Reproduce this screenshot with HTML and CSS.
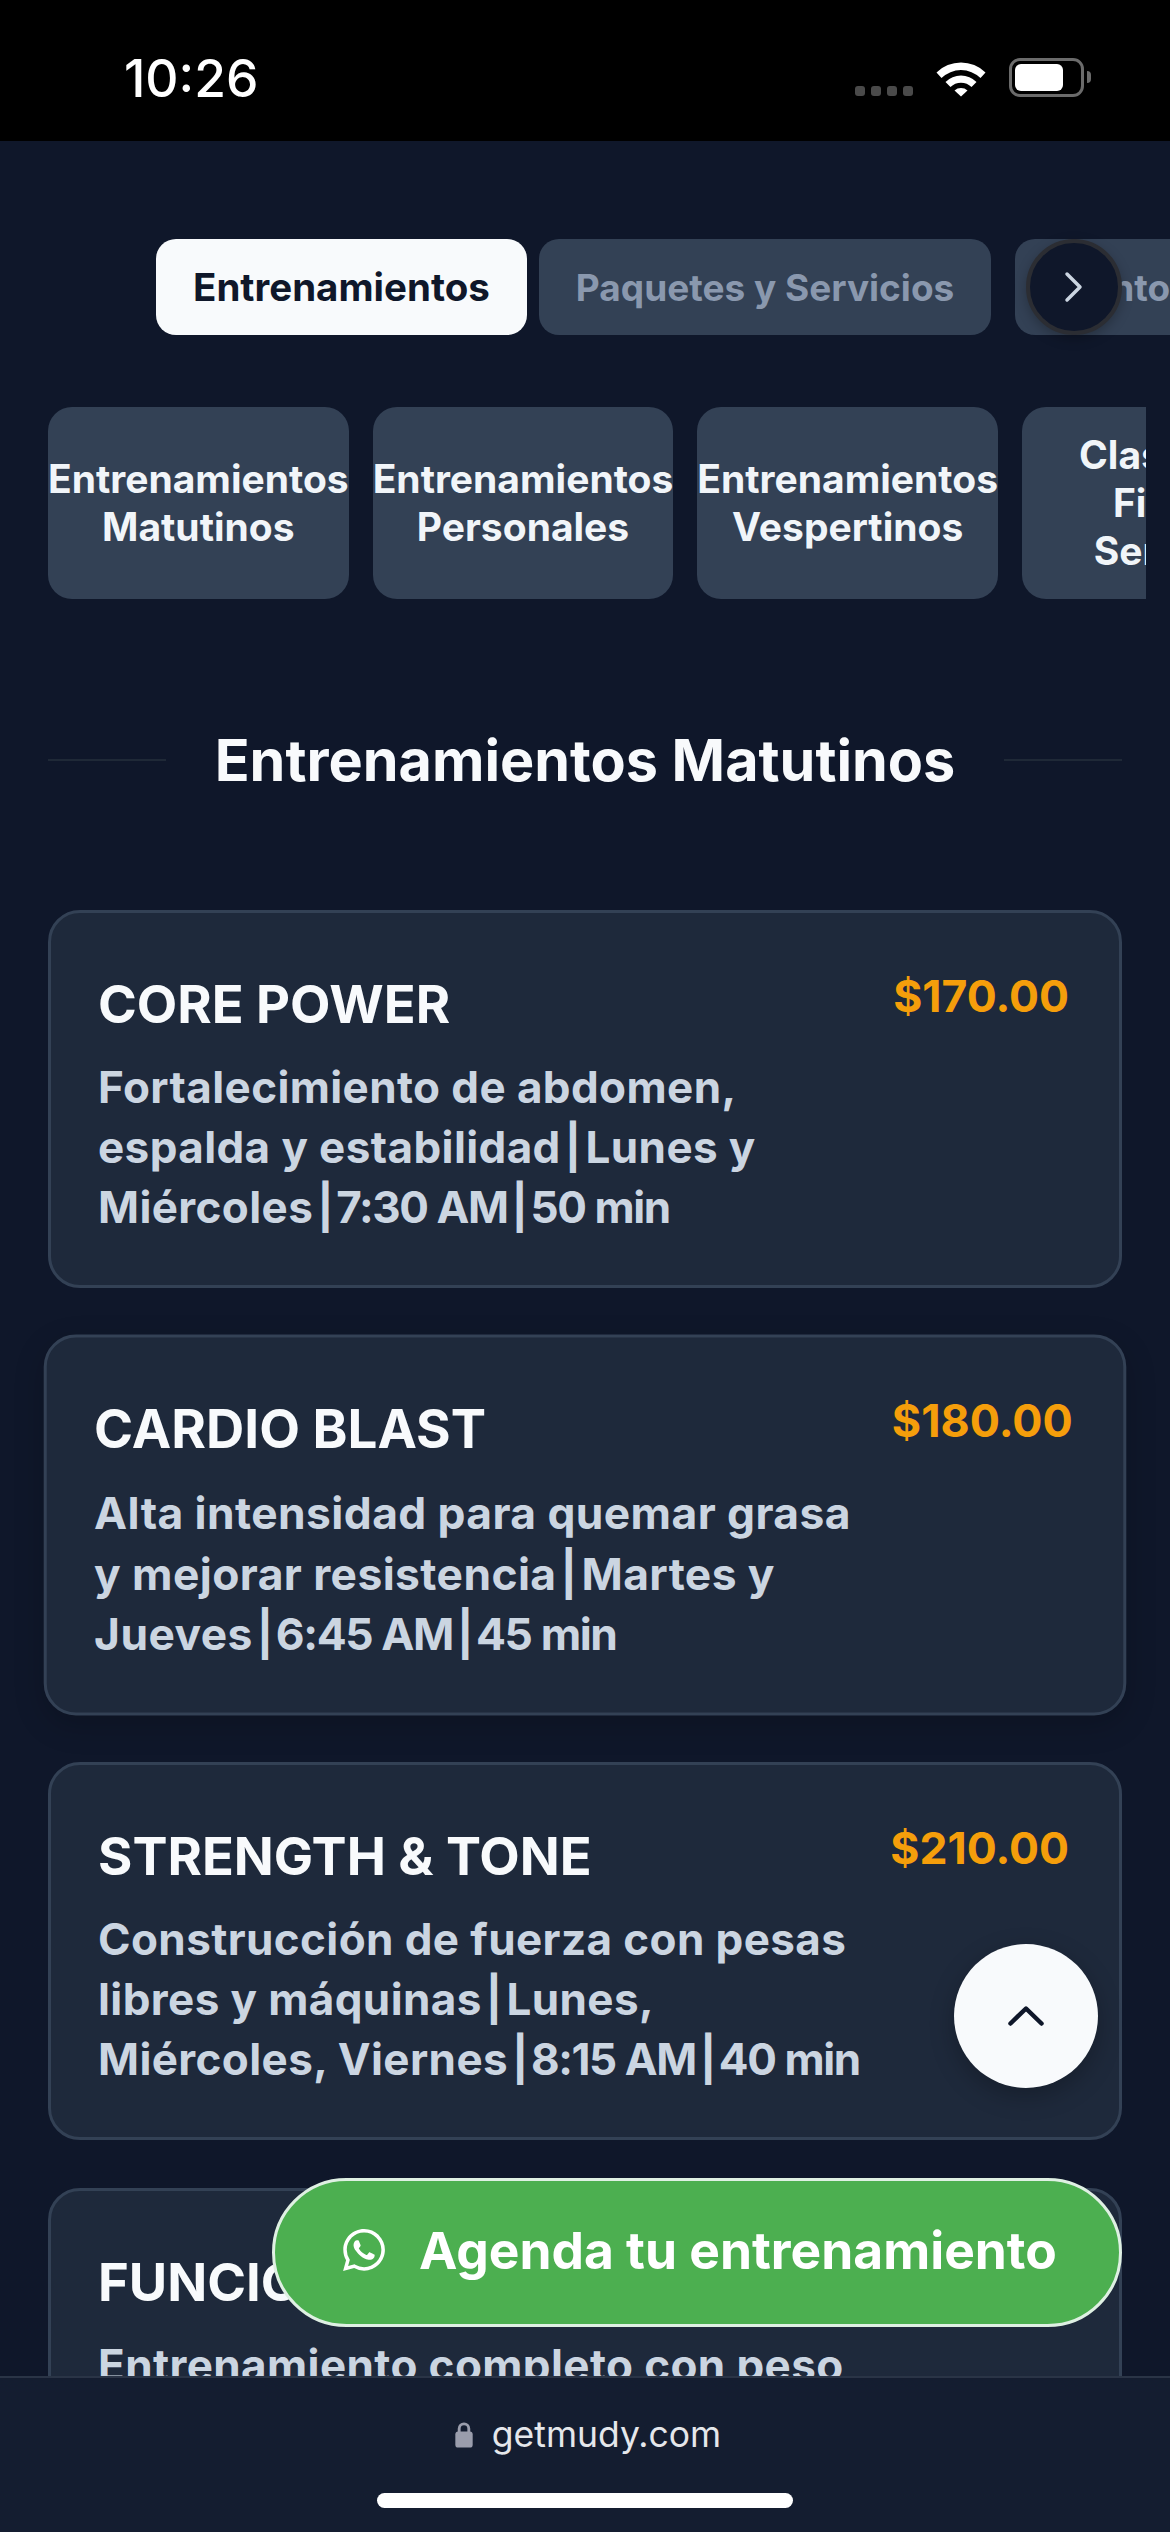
FILE: index.html
```html
<!DOCTYPE html>
<html lang="es">
<head>
    <meta charset="UTF-8">
    <meta name="viewport" content="width=device-width, initial-scale=1.0">
    <title>Entrenamientos</title>
    <link rel="stylesheet" href="styles.css">
</head>
<body>
    <div class="phone">
        <!-- iOS status bar -->
        <header class="status-bar">
            <span class="clock">10:26</span>
            <div class="status-icons">
                <div class="signal"><i></i><i></i><i></i><i></i></div>
                <svg class="wifi" viewBox="0 0 50 38" width="50" height="38">
                    <path d="M0.5 13.5 A35 35 0 0 1 49.5 13.5 L44.5 19 A28 28 0 0 0 5.5 19 Z" fill="#fff"/>
                    <path d="M9.5 23 A22 22 0 0 1 40.5 23 L35.5 28 A15 15 0 0 0 14.5 28 Z" fill="#fff"/>
                    <path d="M18.5 31.5 A10 10 0 0 1 31.5 31.5 L25 37.5 Z" fill="#fff"/>
                </svg>
                <div class="battery"><div class="battery-level"></div></div>
            </div>
        </header>

        <main class="content">
            <nav class="tabs">
                <button class="tab active">Entrenamientos</button>
                <button class="tab">Paquetes y Servicios</button>
                <button class="tab tab-last">Puntos</button>
            </nav>
            <button class="tabs-next" aria-label="Siguiente">
                <svg viewBox="0 0 20 32" width="20" height="32"><path d="M3 3 L16 16 L3 29" fill="none" stroke="#cbd5e1" stroke-width="3.5" stroke-linecap="round" stroke-linejoin="round"/></svg>
            </button>

            <div class="subtabs">
                <button class="subtab">Entrenamientos<br>Matutinos</button>
                <button class="subtab">Entrenamientos<br>Personales</button>
                <button class="subtab">Entrenamientos<br>Vespertinos</button>
                <button class="subtab">Clases de<br>Fitbox<br>Servicio</button>
            </div>

            <div class="section-title">
                <span class="rule"></span>
                <h2>Entrenamientos Matutinos</h2>
                <span class="rule"></span>
            </div>

            <section class="cards">
                <article class="card">
                    <div class="card-info">
                        <h3>CORE POWER</h3>
                        <p>Fortalecimiento de abdomen,<br>espalda y estabilidad<span class="sep">|</span>Lunes y<br>Miércoles<span class="sched"><span class="sep">|</span>7:30 AM<span class="sep">|</span>50 min</span></p>
                    </div>
                    <span class="price">$170.00</span>
                </article>
                <article class="card featured">
                    <div class="card-info">
                        <h3>CARDIO BLAST</h3>
                        <p>Alta intensidad para quemar grasa<br>y mejorar resistencia<span class="sep">|</span>Martes y<br>Jueves<span class="sched"><span class="sep">|</span>6:45 AM<span class="sep">|</span>45 min</span></p>
                    </div>
                    <span class="price">$180.00</span>
                </article>
                <article class="card">
                    <div class="card-info">
                        <h3>STRENGTH &amp; TONE</h3>
                        <p>Construcción de fuerza con pesas<br>libres y máquinas<span class="sep">|</span>Lunes,<br>Miércoles, Viernes<span class="sched"><span class="sep">|</span>8:15 AM<span class="sep">|</span>40 min</span></p>
                    </div>
                    <span class="price">$210.00</span>
                </article>
                <article class="card">
                    <div class="card-info">
                        <h3>FUNCIONAL</h3>
                        <p>Entrenamiento completo con peso<br>corporal<span class="sep">|</span>Martes y Jueves<br>7:00 AM<span class="sep">|</span>45 min</p>
                    </div>
                    <span class="price">$190.00</span>
                </article>
            </section>

            <button class="scroll-top" aria-label="Subir">
                <svg viewBox="0 0 36 20" width="36" height="20"><path d="M2.5 17.5 L18 2.5 L33.5 17.5" fill="none" stroke="#0f172a" stroke-width="4.5" stroke-linecap="round" stroke-linejoin="round"/></svg>
            </button>

            <button class="whatsapp-cta">
                <svg class="wa-icon" viewBox="0 0 24 24" width="42" height="42">
                    <path fill="#fff" d="M17.47 14.38c-.3-.15-1.76-.87-2.03-.97-.27-.1-.47-.15-.67.15-.2.3-.77.97-.94 1.16-.17.2-.35.22-.64.07-.3-.15-1.26-.46-2.39-1.47-.88-.79-1.48-1.76-1.65-2.06-.17-.3-.02-.46.13-.6.13-.14.3-.35.45-.52.15-.17.2-.3.3-.5.1-.2.05-.37-.02-.52-.07-.15-.67-1.61-.92-2.21-.24-.58-.49-.5-.67-.51h-.57c-.2 0-.52.07-.79.37-.27.3-1.04 1.02-1.04 2.48 0 1.46 1.07 2.88 1.21 3.07.15.2 2.1 3.2 5.08 4.49.71.3 1.26.49 1.69.63.71.22 1.36.19 1.87.12.57-.09 1.76-.72 2.01-1.41.25-.7.25-1.29.17-1.41-.07-.13-.27-.2-.57-.35zM12.05 21.8h-.01a9.87 9.87 0 0 1-5.03-1.38l-.36-.21-3.74.98 1-3.65-.24-.37a9.86 9.86 0 0 1-1.51-5.26c0-5.45 4.44-9.88 9.89-9.88 2.64 0 5.12 1.03 6.99 2.9a9.83 9.83 0 0 1 2.89 6.99c0 5.45-4.44 9.88-9.88 9.88zM20.46 3.49A11.82 11.82 0 0 0 12.05 0C5.5 0 .16 5.34.16 11.89c0 2.1.55 4.14 1.59 5.94L.06 24l6.31-1.65a11.88 11.88 0 0 0 5.68 1.45h.01c6.55 0 11.89-5.34 11.89-11.89 0-3.18-1.24-6.16-3.49-8.41z"/>
                </svg>
                <span>Agenda tu entrenamiento</span>
            </button>
        </main>

        <!-- Safari address bar -->
        <footer class="address-bar">
            <div class="url">
                <svg viewBox="0 0 20 28" width="20" height="27"><path d="M5 13 V8 A5 5 0 0 1 15 8 V13" fill="none" stroke="#9a9dac" stroke-width="3"/><rect x="1" y="11" width="18" height="16.5" rx="3" fill="#9a9dac"/></svg>
                <span>getmudy.com</span>
            </div>
            <div class="home-indicator"></div>
        </footer>
    </div>
</body>
</html>
```

FILE: styles.css
```css
/* Reset and page base */
* {
    margin: 0;
    padding: 0;
    box-sizing: border-box;
}

body {
    background: #0f172a;
    font-family: "Inter", "Liberation Sans", sans-serif;
    color: #f8fafc;
}

button {
    font-family: inherit;
    border: none;
}

.phone {
    width: 1170px;
    height: 2532px;
    display: flex;
    flex-direction: column;
    overflow: hidden;
}

/* Status bar */
.status-bar {
    height: 141px;
    flex-shrink: 0;
    background: #000;
    display: flex;
    align-items: center;
    justify-content: space-between;
    padding: 14px 86px 0 124px;
}

.clock {
    font-family: "Inter", sans-serif;
    font-size: 51.5px;
    font-weight: 500;
    color: #fff;
}

.status-icons {
    display: flex;
    align-items: center;
}

.signal {
    display: flex;
    gap: 6px;
    margin-top: 27px;
    margin-right: 23px;
}

.signal i {
    width: 10px;
    height: 10px;
    border-radius: 3px;
    background: #4a4a4a;
}

.wifi {
    margin-right: 23px;
}

.battery {
    position: relative;
    width: 75px;
    height: 39px;
    border: 3px solid #6b6b6b;
    border-radius: 11px;
    padding: 3px;
}

.battery::after {
    content: "";
    position: absolute;
    right: -10px;
    top: 10px;
    width: 4px;
    height: 12px;
    background: #6b6b6b;
    border-radius: 0 5px 5px 0;
}

.battery-level {
    width: 48px;
    height: 100%;
    background: #fff;
    border-radius: 6px;
}

/* Scrolling content */
.content {
    position: relative;
    flex: 1;
    min-height: 0;
    overflow: hidden;
    background: #0f172a;
    padding-top: 98px;
}

.tabs {
    display: flex;
    gap: 12px;
    padding-left: 156px;
    white-space: nowrap;
}

.tab {
    flex-shrink: 0;
    height: 96px;
    padding: 0 37px;
    border-radius: 20px;
    background: #334155;
    color: #8a98ae;
    font-size: 37px;
    font-weight: 700;
}

.tab.active {
    background: #f8fafc;
    color: #0f172a;
    font-size: 38.5px;
}

.tab-last {
    margin-left: 12px;
    padding-left: 49px;
}

.tabs-next {
    position: absolute;
    left: 1026px;
    top: 98px;
    width: 96px;
    height: 96px;
    border-radius: 50%;
    background: #0f172a;
    border: 4px solid #2b2d33;
    display: flex;
    align-items: center;
    justify-content: center;
    box-shadow: 0 4px 12px rgba(0, 0, 0, 0.25);
}

.subtabs {
    display: flex;
    gap: 24px;
    margin: 72px 24px 0 48px;
    overflow: hidden;
}

.subtab {
    flex: 0 0 300px;
    height: 192px;
    border-radius: 24px;
    background: #334155;
    color: #f1f5f9;
    font-size: 39px;
    font-weight: 700;
    line-height: 48px;
    text-align: center;
    white-space: nowrap;
}

/* Section heading with side rules */
.section-title {
    display: flex;
    align-items: center;
    justify-content: space-between;
    margin: 122px 48px 0;
    height: 78px;
}

.rule {
    width: 118px;
    height: 2px;
    background: #1f2937;
}

.section-title h2 {
    font-size: 57.5px;
    font-weight: 700;
    color: #f8fafc;
}

/* Service cards */
.cards {
    display: flex;
    flex-direction: column;
    gap: 48px;
    margin: 111px 48px 0;
}

.card {
    flex-shrink: 0;
    height: 378px;
    display: flex;
    justify-content: space-between;
    align-items: flex-start;
    padding: 58px 50px 0 47px;
    background: #1e293b;
    border: 3px solid #334155;
    border-radius: 32px;
}

.card.featured {
    transform: scale(1.008);
    box-shadow: 0 10px 30px rgba(0, 0, 0, 0.18);
}

.card h3 {
    font-size: 52.5px;
    font-weight: 700;
    line-height: 66px;
    color: #f8fafc;
    margin-bottom: 20px;
}

.card p {
    font-size: 44px;
    font-weight: 700;
    letter-spacing: 0.4px;
    line-height: 60px;
    color: #cbd5e1;
    white-space: nowrap;
}

/* Schedule part of the description runs tighter than the prose */
.sched {
    letter-spacing: -1.4px;
}

.sep {
    margin: 0 4px;
}

.price {
    font-size: 44.5px;
    font-weight: 700;
    line-height: 50px;
    color: #f59e0b;
}

/* Floating buttons */
.scroll-top {
    position: absolute;
    left: 954px;
    top: 1803px;
    width: 144px;
    height: 144px;
    border-radius: 50%;
    background: #f8fafc;
    display: flex;
    align-items: center;
    justify-content: center;
    box-shadow: 0 8px 24px rgba(0, 0, 0, 0.25);
}

.whatsapp-cta {
    position: absolute;
    left: 272px;
    top: 2037px;
    width: 850px;
    height: 149px;
    border-radius: 75px;
    background: #4caf50;
    border: 3px solid #dff0e3;
    color: #fff;
    display: flex;
    align-items: center;
    padding: 0 0 5px 68px;
    gap: 34px;
    font-size: 51.5px;
    font-weight: 700;
    white-space: nowrap;
}

.wa-icon {
    flex-shrink: 0;
}

/* Address bar */
.address-bar {
    height: 156px;
    flex-shrink: 0;
    background: #141d30;
    border-top: 2px solid #2a3446;
    display: flex;
    flex-direction: column;
    align-items: center;
    padding-top: 40px;
}

.url {
    display: flex;
    align-items: center;
    gap: 18px;
    height: 32px;
    padding-left: 5px;
    font-size: 35.5px;
    color: #e5e7eb;
}

.home-indicator {
    width: 416px;
    height: 15px;
    margin-top: 43px;
    border-radius: 8px;
    background: #fff;
}
```
